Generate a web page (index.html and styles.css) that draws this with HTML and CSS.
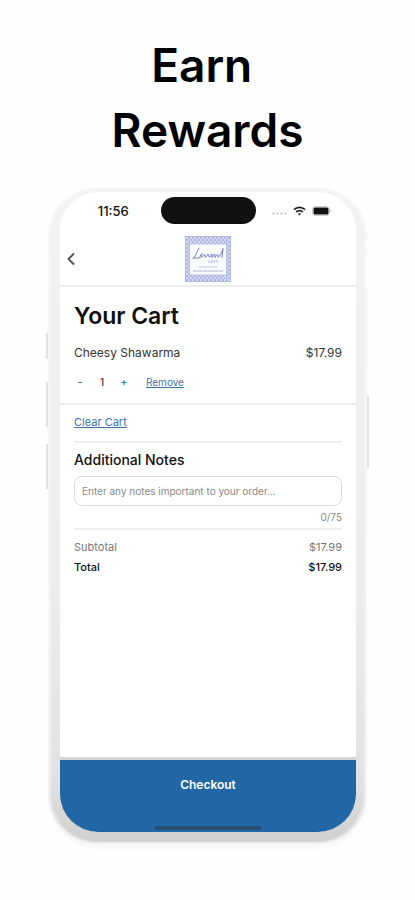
FILE: index.html
```
<!DOCTYPE html>
<html lang="en">
    <head>
        <meta charset="UTF-8">
        <meta name="viewport" content="width=device-width, initial-scale=1.0">
        <title>Earn Rewards</title>
        <link rel="stylesheet" href="styles.css">
    </head>
    <body>
        <h1 class="headline">Earn&nbsp;<br>Rewards</h1>

        <div class="phone">
            <span class="side-btn silent"></span>
            <span class="side-btn vol-up"></span>
            <span class="side-btn vol-down"></span>
            <span class="side-btn power"></span>

            <div class="screen">
                <div class="status-bar">
                    <span class="clock">11:56</span>
                    <span class="island"></span>
                    <div class="status-icons">
                        <svg class="dots" width="15" height="3" viewBox="0 0 15 3" fill="#bbb">
                            <circle cx="1.5" cy="1.5" r="1"/>
                            <circle cx="5.5" cy="1.5" r="1"/>
                            <circle cx="9.5" cy="1.5" r="1"/>
                            <circle cx="13.5" cy="1.5" r="1"/>
                        </svg>
                        <svg width="13" height="10" viewBox="0 0 13 10" fill="none" stroke="#222" stroke-width="1.8">
                            <path d="M1 3.6C4 .6 9 .6 12 3.6"/>
                            <path d="M3.2 6C5 4.2 8 4.2 9.8 6"/>
                            <path d="M6.5 9.6L4.8 7.8C5.8 6.9 7.2 6.9 8.2 7.8Z" fill="#222" stroke="none"/>
                        </svg>
                        <svg width="20" height="10" viewBox="0 0 20 10">
                            <rect x=".5" y=".5" width="17" height="9" rx="2.5" fill="#fff" stroke="#ccc"/>
                            <rect x="1.5" y="1.5" width="15" height="7" rx="1.5" fill="#111"/>
                            <path d="M18.5 3.5v3c1.3-.5 1.3-2.5 0-3z" fill="#bbb"/>
                        </svg>
                    </div>
                </div>

                <header class="top-bar">
                    <button class="back" type="button" aria-label="Back">
                        <svg width="8" height="14" viewBox="0 0 8 14" fill="none" stroke="#555" stroke-width="2">
                            <path d="M7 1.5L1.5 7L7 12.5"/>
                        </svg>
                    </button>
                    <svg class="logo" width="46" height="46" viewBox="0 0 46 46">
                        <defs>
                            <pattern id="tiles" width="4" height="4" patternUnits="userSpaceOnUse">
                                <rect width="4" height="4" fill="#d6dbf3"/>
                                <path d="M0 2L2 0L4 2L2 4Z" fill="none" stroke="#a4add9" stroke-width=".8"/>
                            </pattern>
                        </defs>
                        <rect width="46" height="46" fill="url(#tiles)"/>
                        <rect x=".5" y=".5" width="45" height="45" fill="none" stroke="#aeb7e0" stroke-width=".8"/>
                        <rect x="4.500" y="8" width="37" height="31" fill="#fafbff" stroke="#aeb7e0" stroke-width=".8"/>
                        <g fill="none" stroke="#6570b4" stroke-width=".9" stroke-linecap="round" stroke-linejoin="round">
                            <path d="M14 12C12 16 11 19 8 22.500C10 21 12 23 15.500 21.500"/>
                            <path d="M15 20C18 19 18 16.500 16 18.500C15 21 17 22 19.500 18.500L20.500 21.500L23 18C24 18 23 21.500 25 21C27 18 26 17.500 27 18.500L27 21.500C28 19 29 18 30 18.500L30 21.500C32 17.500 34 17.500 33 21C35 21 37 16 38 12.500L37 21.500"/>
                        </g>
                        <text class="logo-cafe" x="23" y="27">CAFE</text>
                        <path d="M13 31H33" stroke="#b3badf" stroke-width=".7"/>
                        <path d="M8 35H38" stroke="#9aa3d4" stroke-width="1.200" stroke-dasharray="3 .6 1.500 .5"/>
                    </svg>
                </header>

                <main class="cart">
                    <section class="items">
                        <h2 class="cart-title">Your Cart</h2>
                        <div class="row item">
                            <span>Cheesy Shawarma</span>
                            <span>$17.99</span>
                        </div>
                        <div class="item-actions">
                            <button class="qty-btn" type="button">-</button>
                            <span class="qty">1</span>
                            <button class="qty-btn" type="button">+</button>
                            <a class="link remove" href="#">Remove</a>
                        </div>
                    </section>

                    <section class="details">
                        <a class="link clear" href="#">Clear Cart</a>
                        <div class="notes">
                            <label class="notes-label" for="notes">Additional Notes</label>
                            <input class="notes-input" id="notes" type="text" maxlength="75" placeholder="Enter any notes important to your order...">
                            <div class="counter">0/75</div>
                        </div>
                        <div class="row subtotal">
                            <span>Subtotal</span>
                            <span>$17.99</span>
                        </div>
                        <div class="row total">
                            <span>Total</span>
                            <span>$17.99</span>
                        </div>
                    </section>
                </main>

                <button class="checkout" type="button">Checkout</button>
                <span class="home-bar"></span>
            </div>
        </div>
    </body>
</html>
```
FILE: styles.css
```
* {
    box-sizing: border-box;
}

body {
    margin: 0;
    padding: 33px 48px 56px;
    background: #fefefe;
    color: #111;
    font-family: Inter, "Liberation Sans", sans-serif;
    font-size: 11px;
}

button {
    border: none;
    padding: 0;
    background: none;
    font: inherit;
    cursor: pointer;
}

.headline {
    margin: 0 0 25px;
    color: #000;
    font-size: 46px;
    font-weight: 600;
    line-height: 65px;
    text-align: center;
}

/* Phone frame */
.phone {
    position: relative;
    max-width: 420px;
    margin: 0 auto;
    padding: 4px 11px 11px 12px;
    border-radius: 48px;
    background: linear-gradient(#f3f3f3, #ededed 60%, #e2e2e2 90%, #cfcfcf);
    box-shadow: inset 2px 0 3px #f8f8f8, inset -2px 0 3px #f8f8f8, 0 8px 8px -6px #eee;
}

.side-btn {
    position: absolute;
    left: -2px;
    width: 2px;
    height: 45px;
    background: #e2e2e2;
}

.silent {
    top: 145px;
    height: 26px;
}

.vol-up {
    top: 194px;
}

.vol-down {
    top: 256px;
}

.power {
    top: 207px;
    left: auto;
    right: -2px;
    height: 73px;
}

.screen {
    position: relative;
    display: flex;
    flex-direction: column;
    min-height: 640px;
    border-radius: 38px;
    background: #fff;
    overflow: hidden;
}

.status-bar {
    display: grid;
    grid-template-columns: 1fr 95px 1fr;
    align-items: center;
    padding-top: 5px;
}

.clock {
    padding-left: 6px;
    font-size: 13px;
    font-weight: 500;
    text-align: center;
}

.island {
    height: 27px;
    border-radius: 14px;
    background: #111;
}

.status-icons {
    display: flex;
    align-items: center;
    justify-content: center;
    gap: 6px;
    padding-right: 8px;
}

.dots {
    margin-top: 6px;
}

/* Header */
.top-bar {
    display: grid;
    grid-template-columns: 1fr auto 1fr;
    align-items: center;
    padding: 12px 7px 3px;
    border-bottom: 2px solid #ececec;
}

.back {
    justify-self: start;
    display: flex;
}

.logo {
    display: block;
}

.logo-cafe {
    fill: #8c96ce;
    font-size: 4px;
}

/* Cart */
.cart {
    flex: 1;
}

.items {
    padding: 14px 14px 13px;
    border-bottom: 2px solid #ededed;
}

.cart-title {
    margin: 0 0 14px;
    font-size: 23px;
    font-weight: 600;
    line-height: 30px;
}

.row {
    display: flex;
    justify-content: space-between;
}

.item {
    color: #333;
    font-size: 12px;
    line-height: 16px;
}

.item-actions {
    display: flex;
    align-items: center;
    margin-top: 13px;
    line-height: 16px;
}

.qty-btn {
    width: 12px;
    color: #2166a5;
}

.qty {
    width: 32px;
    font-size: 10px;
    text-align: center;
}

.link {
    color: #3a72ac;
    text-decoration: underline;
}

.remove {
    margin-left: 16px;
    font-size: 10px;
}

.details {
    padding: 9px 14px;
}

.clear {
    display: block;
    width: fit-content;
    font-size: 11px;
    line-height: 16px;
}

.notes {
    margin: 11px 0 9px;
    padding: 8px 0 3px;
    border-top: 2px solid #eee;
    border-bottom: 2px solid #eee;
}

.notes-label {
    display: block;
    font-size: 14px;
    font-weight: 500;
    line-height: 18px;
}

.notes-input {
    display: block;
    width: 100%;
    height: 30px;
    margin: 7px 0 3px;
    padding: 0 7px;
    border: 1px solid #ddd;
    border-radius: 8px;
    background: #fff;
    color: #333;
    font: inherit;
    font-size: 10px;
}

.notes-input::placeholder {
    color: #888;
}

.counter {
    color: #888;
    font-size: 10px;
    line-height: 16px;
    text-align: right;
}

.subtotal {
    margin-bottom: 4px;
    color: #777;
    font-size: 11px;
    line-height: 16px;
}

.total {
    font-size: 11px;
    font-weight: 500;
    line-height: 16px;
}

.checkout {
    height: 75px;
    padding-bottom: 23px;
    border-top: 3px solid #d5d5d2;
    background: #2166a5;
    color: #fff;
    font-size: 12px;
    font-weight: 600;
}

.home-bar {
    position: absolute;
    bottom: 2px;
    left: 50%;
    width: 106px;
    height: 4px;
    margin-left: -53px;
    background: #2b4f73;
}
```
